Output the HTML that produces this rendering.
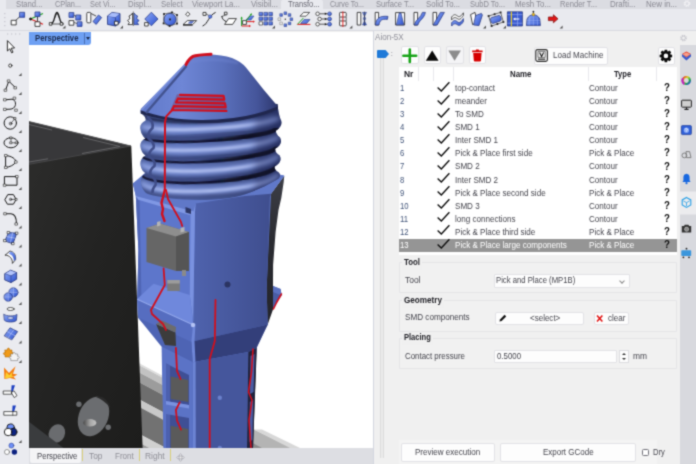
<!DOCTYPE html><html><head><meta charset="utf-8"><title>Aion-5X</title><style>html,body{margin:0;padding:0;background:#f0f0f0;}
body{width:696px;height:464px;overflow:hidden;font-family:"Liberation Sans",sans-serif;font-size:9px;color:#45454d;}
#app{position:relative;width:696px;height:464px;overflow:hidden;background:#f0f0f0;filter:url(#soft);}
#app div,#app span,#app i,#app b,#app em,#app svg{position:absolute;box-sizing:border-box;}
.t{white-space:nowrap;transform-origin:0 0;}
#tabrow{left:0;top:0;width:696px;height:9.3px;background:#dbdce2;overflow:hidden;}
#acttab{left:281px;top:0;width:42px;height:10px;background:#e9eaef;border-radius:2px 2px 0 0;}
#toolrow{left:0;top:9.3px;width:696px;height:21.5px;background:#e9eaef;border-bottom:1px solid #d9dae0;}
#lefttb{left:0;top:31px;width:29px;height:433px;background:#eaebf0;}
#vp{left:29px;top:32px;width:343.5px;height:416px;background:#fff;}
#vptab{left:29px;top:32px;width:62px;height:12.5px;background:#6ea0f3;border-radius:0 0 3px 0;}
#vptab i{left:54.5px;top:1px;width:1px;height:11px;background:#4a6fb5;}
#vptab b{left:56.5px;top:5px;width:0;height:0;border-left:2.5px solid transparent;border-right:2.5px solid transparent;border-top:3px solid #1c2b4d;}
#vpbot{left:29px;top:448px;width:344px;height:16px;background:#dddee3;}
#bact{left:1px;top:0;width:50.5px;height:14.5px;background:#f4f4f6;border-radius:0 0 2px 2px;}
#vpbot i{top:1px;width:1.5px;height:12px;background:#d8cf7a;}
#panel{left:373px;top:31px;width:323px;height:433px;background:#f0f0f0;border-left:1.2px solid #d3d6e0;}
#strip{left:679.5px;top:44.5px;width:17px;height:420px;background:#d8d9de;}
#track{left:380.2px;top:58px;width:3.8px;height:400px;background:#ebebeb;border-left:0.8px solid #dcdcdc;border-right:0.8px solid #dcdcdc;}
#marker{left:376.8px;top:50px;width:12.2px;height:8px;background:#1f7ad8;clip-path:polygon(0 0,72% 0,100% 50%,72% 100%,0 100%);border-radius:1px;}
.btn{background:#fdfdfd;border:1px solid #e2e2e6;border-radius:2px;}
.btn.dis{background:#f4f4f6;}
#table{left:398.5px;top:67px;width:278.5px;height:187.5px;background:#fff;}
.cd{top:67px;width:1px;height:13.5px;background:#e8e8ec;}
#selrow{left:398.5px;width:278.5px;height:12.6px;background:#959595;}
.grp{left:398.6px;width:278.4px;border:1px solid #e4e4e7;border-radius:1px;background:#f1f1f1;}
.ghb{height:12px;background:#f0f0f0;}
.inp{background:#fdfdfd;border:1px solid #e2e2e6;border-radius:1px;}
.inp em{right:5px;top:3.5px;width:4px;height:4px;border-right:1px solid #888;border-bottom:1px solid #888;transform:rotate(45deg);}
#spin{left:619px;top:349.5px;width:9.5px;height:13px;background:#fdfdfd;border:1px solid #dcdce0;}
#spin b{left:2px;width:0;height:0;border-left:2px solid transparent;border-right:2px solid transparent;}
#spin b.u{top:2px;border-bottom:2.5px solid #333;}
#spin b.d{top:7px;border-top:2.5px solid #333;}
#chk{left:641.8px;top:448.8px;width:7.6px;height:7.6px;border:1px solid #707078;border-radius:1.5px;background:#fff;}

#tabl{left:0;top:0;width:6px;height:10px;background:#e9eaef;}
</style></head><body>
<svg width="0" height="0" style="position:absolute"><defs><filter id="soft" x="0" y="0" width="100%" height="100%" color-interpolation-filters="sRGB"><feConvolveMatrix order="3" kernelMatrix="0.035 0.11 0.035 0.11 0.42 0.11 0.035 0.11 0.035" divisor="1" edgeMode="duplicate" preserveAlpha="true"/></filter></defs></svg>
<div id="app">
<div id="tabrow"><div id="acttab"></div><div id="tabl"></div>
<span class="t" style="left:15.50px;top:-0.15px;font-size:8.8px;line-height:8.8px;color:#898992;transform:scaleX(0.8737);">Stand...</span>
<span class="t" style="left:54.50px;top:-0.15px;font-size:8.8px;line-height:8.8px;color:#898992;transform:scaleX(0.8306);">CPlan...</span>
<span class="t" style="left:89.50px;top:-0.15px;font-size:8.8px;line-height:8.8px;color:#898992;transform:scaleX(0.8319);">Set Vi...</span>
<span class="t" style="left:127.50px;top:-0.15px;font-size:8.8px;line-height:8.8px;color:#898992;transform:scaleX(0.8738);">Displ...</span>
<span class="t" style="left:161.00px;top:-0.15px;font-size:8.8px;line-height:8.8px;color:#898992;transform:scaleX(0.8873);">Select</span>
<span class="t" style="left:192.00px;top:-0.15px;font-size:8.8px;line-height:8.8px;color:#898992;transform:scaleX(0.8948);">Viewport La...</span>
<span class="t" style="left:251.00px;top:-0.15px;font-size:8.8px;line-height:8.8px;color:#898992;transform:scaleX(0.8952);">Visibil...</span>
<span class="t" style="left:288.00px;top:-0.15px;font-size:8.8px;line-height:8.8px;color:#666670;transform:scaleX(0.8551);">Transfo...</span>
<span class="t" style="left:329.50px;top:-0.15px;font-size:8.8px;line-height:8.8px;color:#898992;transform:scaleX(0.8022);">Curve To...</span>
<span class="t" style="left:375.50px;top:-0.15px;font-size:8.8px;line-height:8.8px;color:#898992;transform:scaleX(0.8569);">Surface T...</span>
<span class="t" style="left:426.00px;top:-0.15px;font-size:8.8px;line-height:8.8px;color:#898992;transform:scaleX(0.8836);">Solid To...</span>
<span class="t" style="left:470.00px;top:-0.15px;font-size:8.8px;line-height:8.8px;color:#898992;transform:scaleX(0.8552);">SubD To...</span>
<span class="t" style="left:515.00px;top:-0.15px;font-size:8.8px;line-height:8.8px;color:#898992;transform:scaleX(0.8904);">Mesh To...</span>
<span class="t" style="left:559.50px;top:-0.15px;font-size:8.8px;line-height:8.8px;color:#898992;transform:scaleX(0.8629);">Render T...</span>
<span class="t" style="left:609.50px;top:-0.15px;font-size:8.8px;line-height:8.8px;color:#898992;transform:scaleX(0.8992);">Drafti...</span>
<span class="t" style="left:646.00px;top:-0.15px;font-size:8.8px;line-height:8.8px;color:#898992;transform:scaleX(0.9056);">New in...</span>
</div>
<div id="toolrow"></div>
<div id="lefttb"></div>
<div id="vp"></div>
<svg id="model" style="left:0;top:0" width="696" height="464" viewBox="0 0 696 464">
<defs>
<clipPath id="vpc"><rect x="29" y="32" width="343.5" height="416"/></clipPath>
<filter id="b1" x="-20%" y="-50%" width="140%" height="200%"><feGaussianBlur stdDeviation="0.9"/></filter>
<filter id="b2" x="-20%" y="-50%" width="140%" height="200%"><feGaussianBlur stdDeviation="2"/></filter>
<filter id="b3" x="-20%" y="-50%" width="140%" height="200%"><feGaussianBlur stdDeviation="3.2"/></filter>
<filter id="b05" x="-20%" y="-20%" width="140%" height="140%"><feGaussianBlur stdDeviation="0.5"/></filter>
<linearGradient id="gcone" x1="0" y1="0" x2="1" y2="0">
<stop offset="0" stop-color="#6078c8"/><stop offset="0.3" stop-color="#6e86d6"/><stop offset="0.6" stop-color="#5a70bc"/><stop offset="0.85" stop-color="#45559a"/><stop offset="0.97" stop-color="#323d76"/><stop offset="1" stop-color="#2a3366"/>
</linearGradient>
<linearGradient id="gring" x1="0" y1="0" x2="1" y2="0">
<stop offset="0" stop-color="#50639f"/><stop offset="0.3" stop-color="#5b70b6"/><stop offset="0.7" stop-color="#485994"/><stop offset="1" stop-color="#2c3668"/>
</linearGradient>
<linearGradient id="ghl" gradientUnits="userSpaceOnUse" x1="143" y1="0" x2="278" y2="0">
<stop offset="0" stop-color="#c9d4fa" stop-opacity="0.1"/><stop offset="0.2" stop-color="#c9d4fa" stop-opacity="0.9"/><stop offset="0.7" stop-color="#c9d4fa" stop-opacity="0.8"/><stop offset="1" stop-color="#c9d4fa" stop-opacity="0.05"/>
</linearGradient>
<linearGradient id="gcres" gradientUnits="userSpaceOnUse" x1="200" y1="0" x2="272" y2="0"><stop offset="0" stop-color="#0e1020" stop-opacity="0"/><stop offset="0.6" stop-color="#0e1020" stop-opacity="0.85"/><stop offset="1" stop-color="#0a0b14" stop-opacity="1"/></linearGradient>
<linearGradient id="gfr" x1="0" y1="0" x2="1" y2="0">
<stop offset="0" stop-color="#4f63ae"/><stop offset="1" stop-color="#3f4e8e"/>
</linearGradient>
<linearGradient id="gblk" x1="0" y1="0" x2="0" y2="1"><stop offset="0" stop-color="#3c3e46"/><stop offset="0.25" stop-color="#2a2b31"/><stop offset="1" stop-color="#1b1c22"/></linearGradient>
<linearGradient id="ghole" x1="0" y1="0" x2="1" y2="0"><stop offset="0" stop-color="#4a4a4a"/><stop offset="0.55" stop-color="#a8a8a8"/><stop offset="1" stop-color="#c4c4c4"/></linearGradient>
<linearGradient id="gbox" x1="0" y1="0" x2="1" y2="1">
<stop offset="0" stop-color="#2d2d2c"/><stop offset="0.5" stop-color="#232322"/><stop offset="1" stop-color="#1d1d1c"/>
</linearGradient>
<clipPath id="ringclip"><path id="ringsil" d="M140.7 110 L141 113 Q146.5 117 145.5 120.5 Q139 124 140.5 129.5 Q141 135 145.5 138.4 Q139.5 141 140.5 147 Q141 152 145.5 155.6 Q139.5 159 140.5 165 Q141 170 145.5 173.3 Q140 177 141 183 Q142 189 146 193 L148 194 C165 199.5 215 204 245.3 194.2 Q262 188.5 277 179.5 Q282 176.5 278.8 172.5 Q273.6 169.5 274.6 166.5 Q283 162 279.6 155.5 Q274.4 152 275.2 148.5 Q283.5 144 280 137.5 Q275.4 134 276 130.5 Q284 125 280.4 119 Q278.5 114 277.5 104 L210 100 Z"/></clipPath>
</defs>
<g clip-path="url(#vpc)">
<g id="rails">
<path d="M136 361.6 L166 377.5 L166 379.5 L136 363.6 Z" fill="#dedede"/>
<path d="M136 363.6 L166 379.5 L166 386.7 L136 370.8 Z" fill="#c2c2c2"/>
<path d="M136 370.8 L166 386.7 L166 396.4 L136 380.5 Z" fill="#9c9c9c"/>
<path d="M136 380.5 L166 396.4 L166 413.7 L136 397.8 Z" fill="#6e6e6e"/>
<path d="M136 397.8 L166 413.7 L166 421.2 L136 405.3 Z" fill="#c8c8c8"/>
<path d="M136 405.3 L166 421.2 L166 448.1 L136 432.2 Z" fill="#727272"/>
<path d="M136 432.2 L166 448.1 L166 456.8 L136 440.9 Z" fill="#d0d0d0"/>
<path d="M136 440.9 L166 456.8 L166 484.1 L136 468.2 Z" fill="#9a9a9a"/>
<path d="M247 426 L254 429.6 L300 452 L247 452 Z" fill="#b4b4b4"/>
<path d="M254 429.6 L262 429.6 L300 448 L290 448 Z" fill="#d8d8d8"/>
<path d="M247 440 L262 448 L247 448 Z" fill="#8a8a8a"/>
</g>
<g id="box">
<path d="M29 121.5 L131.3 146 L142.6 448 L29 448 Z" fill="url(#gbox)"/>
<path d="M29 121.5 L131 146 L29 164.3 Z" fill="#38383a"/>
<path d="M29 121.5 L131 146" stroke="#5a5a5c" stroke-width="0.8" fill="none"/>
<path d="M29 164.3 L131 146" stroke="#4c4c4e" stroke-width="0.8" fill="none"/>
<path d="M29 124.5 L52 130 M83 137.5 L120 146.5 L82 153.5 M29 162 L48 158.8" stroke="#6a6a6c" stroke-width="0.9" fill="none"/>
<ellipse cx="56.9" cy="433.5" rx="8" ry="9.6" transform="rotate(25 56.9 433.5)" fill="#6a6c6f"/>
<path d="M29 421.8 L63.5 448 L29 448 Z" fill="#3a3c3e"/>
<ellipse cx="93.5" cy="416.5" rx="14.6" ry="20.6" transform="rotate(24 93.5 416.5)" fill="#6b6d70"/>
<path d="M96 397 Q106 394.5 110.6 408 Q104 400 96 397 Z" fill="#2a2a2a"/>
<ellipse cx="89.8" cy="422.8" rx="6.6" ry="3.7" fill="url(#ghole)"/>
<circle cx="78.9" cy="404.2" r="2.7" fill="#6b6d70"/>
<circle cx="108.2" cy="427.2" r="2.7" fill="#6b6d70"/>
</g>
<g id="blue">
<path d="M271 193.7 L284.3 175.8 L283.7 182 L281.3 198 L278.5 210 L275.6 232 L273.1 265 L273 286 L273 309.5 L267.7 324.6 L257 343 L253 448 L240 448 L240 195 Z" fill="url(#gblk)"/>
<path d="M132.8 183.5 L150 172 L276 174 L284.3 175.8 L271 193.7 L267.7 265 L266.6 288 L267.7 324.6 L256.5 348 L250.5 448 L163.8 448 L162 345 L138 317.6 L137.2 300 L138.4 250 L135.8 196 Z" fill="#5d76cb"/>
<path d="M195.6 201 L245 192 L271 186 L271 193.7 L269.9 197.3 L267.7 265 L266.6 288 L267.7 324.6 L191.4 341.7 L193 324.5 L195 212 Z" fill="url(#gfr)"/>
<path d="M273 286 L280.6 289 L281.7 295.5 L276.3 303 L273 309.5 Z" fill="#4a5ca4"/>
<path d="M273 286 L280.6 289 L281.7 295.5 L273 292 Z" fill="#5b72c2"/>
<path d="M190.6 213 L195.6 203.5 L195 212 L193.2 322 L189.8 295 Z" fill="#7a92e0"/>
<path d="M135.8 196 L139.6 198.4 L141.4 297 L137.2 300 L138.4 250 Z" fill="#4f65b5"/>
<path d="M132.8 183.5 L145 173 L276 173.5 L284.3 175.8 L271 193.7 L245 196 L195.6 203.5 L193.5 211.5 L135.8 196 Z" fill="#6078c8"/>
<path d="M135.8 196 L193.5 211.5 L189.8 215 L138.2 199.8 Z" fill="#8098e4"/>
<path d="M185.5 207 L191 209 L191 214 L185.5 212.4 Z" fill="#2c3666"/>
<path d="M137.2 299 L153.5 283.8 L189.8 295 L193 324.5 Z" fill="#6f88dc"/>
<path d="M137.2 299 L193 324.5 L191.4 341.7 L138 317.6 Z" fill="#566dc0"/>
<path d="M138 317.6 L191.4 341.7 L192.7 362.3 L161.6 346.8 Z" fill="#4e64b4"/>
<path d="M191.4 341.7 L267.7 324.6 L256.5 348 L248.3 352 L192.7 362.3 Z" fill="#333f7a"/>
<path d="M193 324.5 L195.5 324 L194.5 341 L195.5 361.8 L192.7 362.3 L191.4 341.7 Z" fill="#6f87d8"/>
<path d="M137.2 299.3 L193 324.8" stroke="#93a8ec" stroke-width="1.2" fill="none"/>
<circle cx="193" cy="325" r="2.2" fill="#b4c3f4" filter="url(#b05)"/>
<path d="M156 324 L175.5 332.5 L176 346 L165 345 Z" fill="#3c3c3c"/>
<path d="M156 324 L162 320.5 L176 327 L175.5 332.5 Z" fill="#6c6c6c"/>
<path d="M161.6 346.8 L192.7 362.3 L193 448 L163.6 448 Z" fill="#5b73c6"/>
<path d="M192.7 362.3 L248.3 352 L247 448 L193 448 Z" fill="#45569c"/>
<path d="M192.7 362.3 L195.6 361.8 L195.8 448 L193 448 Z" fill="#6c84d4"/>
<path d="M248.3 352 L256.5 348 L253 448 L247 448 Z" fill="#20243f"/>
<path d="M250.5 356 L254.6 354 L253.6 392 L250 394 Z M249.8 402 L253.2 400 L252.4 440 L249.4 442 Z" fill="#4a5ca4"/>
<path d="M166 363.5 L189 375 L189 448 L166 448 Z" fill="#3f4f95"/>
<path d="M166 363.5 L170 365.5 L170 448 L166 448 Z" fill="#4c60ae"/>
<path d="M166 401 L189 405 L189 418 L166 414 Z" fill="#5b73c6"/>
<path d="M166 401 L189 405 L189 408.5 L166 404.5 Z" fill="#7a92e0"/>
<path d="M170.7 376.5 L188.3 380 L188.3 402 L170.7 399 Z" fill="#5a5a5a"/>
<path d="M170.7 425.7 L188.3 429 L188.3 448 L170.7 448 Z" fill="#5a5a5a"/>
<circle cx="219.8" cy="397.8" r="2.2" fill="#6a80cc"/><circle cx="219.8" cy="448" r="2.2" fill="#6a80cc"/>
<path d="M146.5 228 L160 223.5 L189 232 L189 271 L176 271 L146.5 262 Z" fill="#666"/>
<path d="M146.5 228 L160 223.5 L189 232 L176 236.5 Z" fill="#8e8e8e"/>
<path d="M176 236.5 L189 232 L189 271 L176 271 Z" fill="#555"/>
<path d="M157 222 L160.5 221 L160.5 225.5 L157 226.5 Z M180.5 228 L184.5 227 L184.5 231.5 L180.5 232.5Z" fill="#b5b5b5"/>
<rect x="167.3" y="280" width="12.5" height="11" fill="#7a7a7a"/>
<rect x="167.3" y="280" width="12.5" height="3.5" fill="#9c9c9c"/>
<rect x="182" y="270" width="4" height="6" fill="#8a8a8a"/>
<circle cx="227.5" cy="284.5" r="3" fill="#2b3462"/>
<g id="rings" clip-path="url(#ringclip)">
<rect x="130" y="100" width="160" height="110" fill="url(#gring)"/>
<path d="M142 129.3 A68.0 8 0 0 0 278 129.3" transform="rotate(-3.5 210.0 137.3)" fill="none" stroke="#232b58" stroke-width="4.5" filter="url(#b2)" opacity="0.75"/>
<path d="M142 148.0 A68.0 10 0 0 0 278 148.0" transform="rotate(-3.5 210.0 158.0)" fill="none" stroke="#232b58" stroke-width="4.5" filter="url(#b2)" opacity="0.75"/>
<path d="M142 166.8 A68.0 12 0 0 0 278 166.8" transform="rotate(-3.5 210.0 178.8)" fill="none" stroke="#232b58" stroke-width="4.5" filter="url(#b2)" opacity="0.75"/>
<path d="M142 182.5 A68.0 13 0 0 0 278 182.5" transform="rotate(-3.5 210.0 195.5)" fill="none" stroke="#232b58" stroke-width="4.5" filter="url(#b2)" opacity="0.75"/>
<path d="M143 121.0 A67.5 7.5 0 0 0 278 121.0" transform="rotate(-3.5 210.5 128.5)" fill="none" stroke="#8297dc" stroke-width="6.5" filter="url(#b2)"/>
<path d="M143 121.0 A67.5 7.5 0 0 0 278 121.0" transform="rotate(-3.5 210.5 128.5)" fill="none" stroke="url(#ghl)" stroke-width="2.2" filter="url(#b1)"/>
<path d="M143 140.0 A67.5 9.5 0 0 0 278 140.0" transform="rotate(-3.5 210.5 149.5)" fill="none" stroke="#8297dc" stroke-width="6.5" filter="url(#b2)"/>
<path d="M143 140.0 A67.5 9.5 0 0 0 278 140.0" transform="rotate(-3.5 210.5 149.5)" fill="none" stroke="url(#ghl)" stroke-width="2.2" filter="url(#b1)"/>
<path d="M143 159.0 A67.5 11.5 0 0 0 278 159.0" transform="rotate(-3.5 210.5 170.5)" fill="none" stroke="#8297dc" stroke-width="6.5" filter="url(#b2)"/>
<path d="M143 159.0 A67.5 11.5 0 0 0 278 159.0" transform="rotate(-3.5 210.5 170.5)" fill="none" stroke="url(#ghl)" stroke-width="2.2" filter="url(#b1)"/>
<path d="M143 177.8 A67.5 13 0 0 0 278 177.8" transform="rotate(-3.5 210.5 190.8)" fill="none" stroke="#8297dc" stroke-width="6.5" filter="url(#b2)"/>
<path d="M143 177.8 A67.5 13 0 0 0 278 177.8" transform="rotate(-3.5 210.5 190.8)" fill="none" stroke="url(#ghl)" stroke-width="2.2" filter="url(#b1)"/>
<path d="M142.5 132.8 A67.5 8 0 0 0 277.5 132.8" transform="rotate(-3.5 210.0 140.8)" fill="none" stroke="#141935" stroke-width="2.4" filter="url(#b05)"/>
<path d="M142.5 132.0 A67.5 8 0 0 0 277.5 132.0" transform="rotate(-3.5 210.0 140.0)" fill="none" stroke="url(#gcres)" stroke-width="4.2" filter="url(#b05)"/>
<path d="M142.5 151.5 A67.5 10 0 0 0 277.5 151.5" transform="rotate(-3.5 210.0 161.5)" fill="none" stroke="#141935" stroke-width="2.4" filter="url(#b05)"/>
<path d="M142.5 150.7 A67.5 10 0 0 0 277.5 150.7" transform="rotate(-3.5 210.0 160.7)" fill="none" stroke="url(#gcres)" stroke-width="4.2" filter="url(#b05)"/>
<path d="M142.5 170.3 A67.5 12 0 0 0 277.5 170.3" transform="rotate(-3.5 210.0 182.3)" fill="none" stroke="#141935" stroke-width="2.4" filter="url(#b05)"/>
<path d="M142.5 169.5 A67.5 12 0 0 0 277.5 169.5" transform="rotate(-3.5 210.0 181.5)" fill="none" stroke="url(#gcres)" stroke-width="4.2" filter="url(#b05)"/>
<path d="M140 107.5 A70.0 14 0 0 0 280 107.5" transform="rotate(-3.5 210.0 121.5)" fill="none" stroke="#1b2145" stroke-width="3" filter="url(#b1)"/>
<rect x="255" y="100" width="40" height="110" fill="#1d2450" opacity="0.35" filter="url(#b3)"/>
</g>
<path d="M147 116.5 Q154 122 152.5 128 Q147 133 148.5 138.5 Q155 143 153.5 148 Q148 152 149.5 157 Q156 161 154.5 166 Q149 170 150.5 175 Q157 180 155.5 185 Q152 189 152.5 193" fill="none" stroke="#3f4d88" stroke-width="2.6" filter="url(#b05)"/>
<path d="M184.8 64 Q190 57 201 54.6 Q220 53.6 232 58 Q241 61.5 246 67.5 L263.5 89.5 L276.8 105.2 Q278.3 107 277 108.8 Q245 122.5 201 122 Q165 121 140.7 113 L140.7 109 Z" fill="url(#gcone)"/>
<path d="M140.7 110.2 Q165 119.4 201 120 Q245 120.3 277.6 106.6 Q278.4 107.6 277.4 109.6 Q245 123.6 201 123 Q165 122 140.7 113.8 Z" fill="#20274e"/>
<path d="M186.5 66 L146 113" stroke="#43528f" stroke-width="2.4" fill="none" filter="url(#b05)"/>
<path d="M184.8 64.5 L141.5 110" stroke="#7a90dc" stroke-width="1.2" fill="none" filter="url(#b05)"/>
<path d="M190 62 Q212 56.5 238 63" stroke="#7389d6" stroke-width="1.5" fill="none" filter="url(#b1)" opacity="0.7"/>
<g fill="none" stroke="#d10f1d" stroke-linecap="round" stroke-linejoin="round">
<path d="M186 64.5 Q189 58.6 193 56.4 Q196.5 54.8 211 54.2" stroke-width="3"/>
<path d="M177 94.2 L224 96 L227 111.5 L170.5 109.8 Z" fill="#8c1428" stroke="none" opacity="0.3"/>
<path d="M223.5 95.8 L180 94.8 M224.3 99.6 L178 98.6 M225 103.4 L176 102.4 M225.7 107.2 L174 106.2 M226.5 111 L172 110 M223.5 95.8 L224.3 99.6 M178 98.6 L176 102.4 M225 103.4 L225.7 107.2 M174 106.2 L172 110" stroke-width="2.2"/><path d="M172.2 110 L166.3 116.4 L165 122 L164.8 190" stroke-width="2"/>
<path d="M164.8 190 L161.5 203 L163 209 L162 214 L164.5 221" stroke-width="2.4"/>
<path d="M166 190 L168 199 L181 222 L182.2 226" stroke-width="1.8"/>
<path d="M163.6 268.5 L164.8 285 L151 310 L152 314 L163 324 L166 330" stroke-width="1.8"/>
<path d="M215.5 300 L214.8 341 L209.7 359 L209.7 448" stroke-width="1.8"/>
<path d="M175.9 348 L177 371 L180.5 379 M179.7 402.4 L175.9 410 L177 420.5 L181 429.6" stroke-width="1.8"/>
<path d="M281.4 294 L276.6 302.5 L273.4 309 M253 349 L251.5 372 L248.5 392 L252 400 L249 420 L251 448" stroke-width="1.6"/>
</g>
</g></g></svg>
<svg id="ticons" style="left:0;top:0" width="696" height="48" viewBox="0 0 696 48">
<defs><linearGradient id="ib" x1="0" y1="0" x2="1" y2="1"><stop offset="0" stop-color="#8eaaf8"/><stop offset="1" stop-color="#2c50cc"/></linearGradient></defs>
<g stroke="#1a1a1a" stroke-width="0.8" fill="none" stroke-linejoin="round">
<rect x="4.2" y="13" width="1.2" height="1.2" fill="#c4c4cc" stroke="none"/>
<rect x="4.2" y="17" width="1.2" height="1.2" fill="#c4c4cc" stroke="none"/>
<rect x="4.2" y="21" width="1.2" height="1.2" fill="#c4c4cc" stroke="none"/>
<rect x="4.2" y="25" width="1.2" height="1.2" fill="#c4c4cc" stroke="none"/>
<path d="M14 22 L21 15.5"/><rect x="11.2" y="20.3" width="5" height="4.6" fill="#fff"/><rect x="19.6" y="12.3" width="5" height="5" fill="url(#ib)" stroke="#2a3c8c"/>
<path d="M37.5 14 L37.5 24" /><path d="M30.5 19 L43 13.6" stroke="#1ea01e" stroke-width="1.1"/><path d="M30.5 19 L43 24.2" stroke="#e02020" stroke-width="1.1"/><circle cx="30.6" cy="19" r="1.1" fill="#111"/><rect x="35" y="12" width="5" height="4.6" fill="url(#ib)" stroke="#2a3c8c"/><rect x="35" y="21.8" width="5" height="4.6" fill="#fff"/>
<path d="M50.5 24 C55 24 54.5 12.5 57 12.5 C59.5 12.5 59 24 63.5 24" stroke-width="1.3"/><path d="M51 24 L63 24 M54.5 18 L57 13 L59.5 18" stroke-width="0.7"/><rect x="49.3" y="22.6" width="2.6" height="2.6" fill="#fff"/><rect x="60.2" y="22.6" width="2.6" height="2.6" fill="#fff"/>
<path d="M62.5 28.5 L65.5 28.5 L65.5 25.5 Z" fill="#555" stroke="none"/>
<rect x="69" y="12.6" width="4.8" height="4.8" fill="url(#ib)" stroke="#2a3c8c"/><rect x="69" y="20.6" width="4.8" height="4.6" fill="#fff"/><rect x="75.8" y="15" width="5" height="5" fill="url(#ib)" stroke="#2a3c8c"/><rect x="77.2" y="21.8" width="4.8" height="4.6" fill="url(#ib)" stroke="#2a3c8c"/><path d="M74 15 L76 16.5 M74 22.5 L77 23.5" stroke-width="0.6"/>
<rect x="86.8" y="12.4" width="4" height="10.4" rx="1" fill="#fff"/><path d="M91 13.5 L96 16" /><path d="M93 21.5 L98.5 15 L101.6 17.6 L96.2 24.4 Z" fill="url(#ib)" stroke="#2a3c8c"/>
<path d="M107.5 16 L112 12.4 L120 13.6 L120 22.4 L115.5 26 L107.5 24.4 Z" fill="url(#ib)" stroke="#22327a"/><path d="M107.5 16 L115.5 17.4 L120 13.6 M115.5 17.4 L115.5 26" stroke="#22327a" stroke-width="0.6"/><path d="M107.8 16.2 L112 12.8 L119.6 13.8 L115.5 17.2 Z" fill="#a8bcfa" stroke="none"/><rect x="114.5" y="21.3" width="3.6" height="3.6" fill="#fff"/>
<path d="M120 28.5 L123 28.5 L123 25.5 Z" fill="#555" stroke="none"/>
<path d="M132.6 13 L131 15 L129 16 L130 18.5 L127.6 20.5 L129.4 22.5 L128 24.6 L132.6 24.6 Z" fill="#fff"/><path d="M134 13 L135.6 15 L137.6 16 L136.6 18.5 L139 20.5 L137.2 22.5 L138.6 24.6 L134 24.6 Z" fill="url(#ib)" stroke="#2a3c8c"/><path d="M133.3 11.5 L133.3 26" stroke="#555"/>
<path d="M144.8 19 L151.4 12.2 L158 19 L151.4 25.8 Z" fill="url(#ib)" stroke="#2a3c8c"/><rect x="144.6" y="22.6" width="3.6" height="3.4" fill="#fff"/>
<circle cx="170" cy="19.4" r="6" fill="url(#ib)" stroke="#22327a"/><path d="M164 14 L172 12.4 L177 15 L177 23.6 L169.6 26 L163.6 23.4 Z" stroke="#333" stroke-width="0.6"/>
<rect x="163.1" y="13.1" width="1.8" height="1.8" fill="#222" stroke="none"/>
<rect x="171.1" y="11.5" width="1.8" height="1.8" fill="#222" stroke="none"/>
<rect x="176.1" y="14.1" width="1.8" height="1.8" fill="#222" stroke="none"/>
<rect x="176.1" y="22.700000000000003" width="1.8" height="1.8" fill="#222" stroke="none"/>
<rect x="168.7" y="25.1" width="1.8" height="1.8" fill="#222" stroke="none"/>
<rect x="162.7" y="22.5" width="1.8" height="1.8" fill="#222" stroke="none"/>
<rect x="169.1" y="18.5" width="1.8" height="1.8" fill="#222" stroke="none"/>
<path d="M185.6 14.2 L187.8 12 L190 14.2 L187.8 16.4 Z" fill="#fff"/><path d="M183 24.6 L187.4 20.6 L196.6 20.6 L192.6 24.6 Z" fill="#fff"/><path d="M188.4 23.2 L190 21.4 L193.6 21.4 L192 23.2 Z" fill="url(#ib)" stroke="#2a3c8c" stroke-width="0.5"/><path d="M183 25.2 L192.6 25.2" stroke-width="0.9"/>
<path d="M202.6 26 C208 24 208.5 15.6 215.6 12.4" stroke-width="1"/><rect x="203" y="12.4" width="3" height="3" fill="#fff"/><path d="M206 14 L209.6 15.8" stroke-width="0.6"/><circle cx="210.2" cy="16.6" r="1.7" fill="url(#ib)" stroke="#2a3c8c" stroke-width="0.6"/>
<path d="M222 16 C222 21 226 20 227.6 23.6" stroke-width="1"/><path d="M224.6 24.4 L228.6 18.6 L236.4 18.6 L232.6 24.4 Z" fill="#fff"/><rect x="224.4" y="12.2" width="2.6" height="2.6" fill="#fff"/><path d="M221.4 16.6 L225.6 15" stroke-width="0.6"/>
<rect x="242.6" y="20.6" width="3.8" height="3.8" fill="#fff"/><path d="M246 20 L249.6 16 L254 16 L251 20 Z" fill="url(#ib)" stroke="#2a3c8c" stroke-width="0.5"/><path d="M241.6 26 L241.6 17.6 M246 21 L251.4 14" stroke="#1ea01e" stroke-width="1"/><path d="M241.6 26 L250 26 M247 21.6 L254 21.6" stroke="#e02020" stroke-width="1"/><path d="M241.6 16.4 L240.4 18.6 L242.8 18.6 Z M251.8 13 L249.8 14.4 L251.6 15.6 Z" fill="#1ea01e" stroke="none"/><path d="M251 26 L249 24.8 L249 27.2 Z M255 21.6 L253 20.4 L253 22.8Z" fill="#e02020" stroke="none"/>
<rect x="259.0" y="12.4" width="3.6" height="3.2" fill="url(#ib)" stroke="#22327a" stroke-width="0.6"/>
<rect x="263.9" y="12.4" width="3.6" height="3.2" fill="url(#ib)" stroke="#22327a" stroke-width="0.6"/>
<rect x="268.8" y="12.4" width="3.6" height="3.2" fill="url(#ib)" stroke="#22327a" stroke-width="0.6"/>
<rect x="259.0" y="17.1" width="3.6" height="3.2" fill="url(#ib)" stroke="#22327a" stroke-width="0.6"/>
<rect x="263.9" y="17.1" width="3.6" height="3.2" fill="url(#ib)" stroke="#22327a" stroke-width="0.6"/>
<rect x="268.8" y="17.1" width="3.6" height="3.2" fill="url(#ib)" stroke="#22327a" stroke-width="0.6"/>
<rect x="259.0" y="21.8" width="3.6" height="3.2" fill="#fff" stroke-width="0.6"/>
<rect x="263.9" y="21.8" width="3.6" height="3.2" fill="url(#ib)" stroke="#22327a" stroke-width="0.6"/>
<rect x="268.8" y="21.8" width="3.6" height="3.2" fill="url(#ib)" stroke="#22327a" stroke-width="0.6"/>
<path d="M272 28.5 L275 28.5 L275 25.5 Z" fill="#555" stroke="none"/>
<rect x="284.0" y="11.9" width="2.6" height="2.6" fill="url(#ib)" stroke="#22327a" stroke-width="0.5"/>
<rect x="288.2" y="13.7" width="2.6" height="2.6" fill="url(#ib)" stroke="#22327a" stroke-width="0.5"/>
<rect x="290.0" y="17.9" width="2.6" height="2.6" fill="url(#ib)" stroke="#22327a" stroke-width="0.5"/>
<rect x="288.2" y="22.1" width="2.6" height="2.6" fill="url(#ib)" stroke="#22327a" stroke-width="0.5"/>
<rect x="284.0" y="23.9" width="2.6" height="2.6" fill="url(#ib)" stroke="#22327a" stroke-width="0.5"/>
<rect x="279.8" y="22.1" width="2.6" height="2.6" fill="#eee" stroke="#777" stroke-width="0.5"/>
<rect x="278.0" y="17.9" width="2.6" height="2.6" fill="#eee" stroke="#777" stroke-width="0.5"/>
<rect x="279.8" y="13.7" width="2.6" height="2.6" fill="url(#ib)" stroke="#22327a" stroke-width="0.5"/>
<circle cx="285.3" cy="19.2" r="0.7" fill="#222" stroke="none"/>
<path d="M300 16.2 L303.6 12.4 L309.6 12.4 L306 16.2 Z" fill="#fff" stroke-width="0.7"/><path d="M300.6 23.6 L304 19.6 L310 19.6 L306.6 23.6 Z" fill="url(#ib)" stroke="#22327a" stroke-width="0.6"/><path d="M297.4 24.4 L303.4 18" stroke="#1ea01e" stroke-width="1"/><path d="M297.4 24.4 L310.4 24.4" stroke="#e02020" stroke-width="1"/>
<path d="M319.6 13.8 L329 13.8" stroke-width="0.7"/><circle cx="317.6" cy="13.8" r="1.8" fill="#fff" stroke-width="0.7"/><circle cx="329.6" cy="13.8" r="1.9" fill="url(#ib)" stroke="#22327a" stroke-width="0.6"/><path d="M326.8 13.8 L324.8 12.600000000000001 L324.8 15.0 Z" fill="#111" stroke="none"/>
<path d="M321.6 19 L329 19" stroke-width="0.7"/><circle cx="319.6" cy="19" r="1.8" fill="#fff" stroke-width="0.7"/><circle cx="329.6" cy="19" r="1.9" fill="url(#ib)" stroke="#22327a" stroke-width="0.6"/><path d="M326.8 19 L324.8 17.8 L324.8 20.2 Z" fill="#111" stroke="none"/>
<path d="M319.6 24.2 L329 24.2" stroke-width="0.7"/><circle cx="317.6" cy="24.2" r="1.8" fill="#fff" stroke-width="0.7"/><circle cx="329.6" cy="24.2" r="1.9" fill="url(#ib)" stroke="#22327a" stroke-width="0.6"/><path d="M326.8 24.2 L324.8 23.0 L324.8 25.4 Z" fill="#111" stroke="none"/>
<rect x="339.6" y="12.4" width="6.6" height="4.6" rx="0.8" fill="#fff"/><rect x="339.6" y="21" width="6.6" height="4.8" rx="0.8" fill="#fff"/><path d="M339.6 17 L339.6 21 M346.2 17 L346.2 21" stroke-width="0.6"/><path d="M342.9 11.4 L342.9 27" stroke="#e02020" stroke-width="1"/>
<path d="M349.4 28.5 L352.4 28.5 L352.4 25.5 Z" fill="#555" stroke="none"/>
<rect x="357.2" y="12.4" width="3.6" height="12.6" fill="#fff"/><path d="M362.6 12.4 L366.4 12.4 L363.4 18.6 L366.4 25 L362.6 25 L365.6 18.6 Z" fill="url(#ib)" stroke="#22327a" stroke-width="0.6"/><path d="M364.5 11.6 L364.5 26" stroke-width="0.5"/>
<rect x="375.2" y="12.4" width="3.4" height="12.6" fill="#fff"/><path d="M375.4 25 C376 18 380 15.6 388 16.4 L387.4 19.4 C381.6 18.6 379.6 20.6 379 25 Z" fill="url(#ib)" stroke="#22327a" stroke-width="0.7"/>
<rect x="395.6" y="12.6" width="9" height="12.4" fill="#fff"/><path d="M399.2 13 L401 13 L403.8 24.8 L396.4 24.8 Z" fill="url(#ib)" stroke="#22327a" stroke-width="0.6"/>
<rect x="414" y="12.4" width="3.6" height="12.6" fill="#fff"/><path d="M414.2 25 C415.4 19.6 421 17.6 422.4 12.4 L425.4 12.4 C424.2 18.6 419.2 20 417.8 25 Z" fill="url(#ib)" stroke="#22327a" stroke-width="0.7"/>
<rect x="433" y="12.4" width="3.6" height="12.6" fill="#fff"/><path d="M433.2 25 L440.4 12.4 L444.4 12.4 L437.2 25 Z" fill="url(#ib)" stroke="#22327a" stroke-width="0.7"/>
<path d="M451.6 17 C454 14 455.4 14.4 457.4 16 C459.4 17.6 461 16.4 463.4 12.8 L463.4 15.4 C461 19 459.4 20 457.4 18.6 C455.4 17.2 454 17 451.6 19.8 Z" fill="#fff" stroke-width="0.7"/><path d="M451.6 22.8 C454 19.8 455.4 20.2 457.4 21.8 C459.4 23.4 461 22.2 463.4 18.6 L463.4 21.6 C461 25.2 459.4 26.2 457.4 24.8 C455.4 23.4 454 23.2 451.6 26 Z" fill="url(#ib)" stroke="#22327a" stroke-width="0.7"/>
<path d="M470.6 14.6 L475 12.4 L477 22.4 L472.6 24.6 Z" fill="#fff"/><path d="M475.6 15.6 L481.4 13.4 L482.4 15 L479 25.6 L473.6 25 Z" fill="url(#ib)" stroke="#22327a" stroke-width="0.7"/>
<path d="M483 28.5 L486 28.5 L486 25.5 Z" fill="#555" stroke="none"/>
<path d="M488.6 16 L500.6 12.4 L503.4 22 L491.6 26 Z" stroke="#333" stroke-width="0.7"/><path d="M491.4 17.6 L499 15.4 C501 15.4 502 19.6 500.4 21 L493 23.4 C490.6 23.4 489.8 18.6 491.4 17.6 Z" fill="url(#ib)" stroke="#22327a" stroke-width="0.7"/>
<rect x="487.70000000000005" y="15.1" width="1.8" height="1.8" fill="#222" stroke="none"/>
<rect x="499.70000000000005" y="11.5" width="1.8" height="1.8" fill="#222" stroke="none"/>
<rect x="502.5" y="21.1" width="1.8" height="1.8" fill="#222" stroke="none"/>
<rect x="490.70000000000005" y="25.1" width="1.8" height="1.8" fill="#222" stroke="none"/>
<rect x="493.70000000000005" y="13.299999999999999" width="1.8" height="1.8" fill="#222" stroke="none"/>
<rect x="496.5" y="23.1" width="1.8" height="1.8" fill="#222" stroke="none"/>
<path d="M503 28.5 L506 28.5 L506 25.5 Z" fill="#555" stroke="none"/>
<rect x="507.4" y="11.8" width="15" height="14.2" fill="#3b5bd0" stroke="#1c2c70" stroke-width="0.7"/><path d="M507.4 14.6 L522.4 14.6 M507.4 23.2 L522.4 23.2 M517.6 11.8 L517.6 26" stroke="#9fb4f6" stroke-width="0.6"/><path d="M511.4 11.8 L511.4 26" stroke="#f0d020" stroke-width="1.1"/><path d="M513 19 L515.4 17.4 L515.4 18.4 L519.4 18.4 L519.4 19.6 L515.4 19.6 L515.4 20.6 Z" fill="#fff" stroke="none"/>
<path d="M526.4 25.6 L527 19 C528.4 16 531 14.8 533.4 14.8 C535.8 14.8 538.4 16 539.8 19 L540.4 25.6 Z" fill="url(#ib)" stroke="#22327a" stroke-width="0.7"/><path d="M529.6 17 L529.2 25.4 M533.4 15 L533.4 25.4 M537.2 17 L537.6 25.4 M526.8 20.6 L540 20.6 M526.6 23 L540.2 23" stroke="#a9bdf8" stroke-width="0.4"/><path d="M533.4 11.6 L533.4 14" stroke-width="0.7"/><circle cx="533.4" cy="11.6" r="0.9" fill="#222" stroke="none"/><circle cx="533.4" cy="14.6" r="1.3" fill="#f0c020" stroke="#806000" stroke-width="0.4"/>
<path d="M548.4 17 L553.4 17 L553.4 14.8 L558 18.8 L553.4 22.8 L553.4 20.6 L548.4 20.6 Z" fill="#e01818" stroke="#7a0c0c" stroke-width="0.7"/>
<path d="M559.6 28.5 L562.6 28.5 L562.6 25.5 Z" fill="#555" stroke="none"/>
</g>
<circle cx="687" cy="3.6" r="2.6" fill="none" stroke="#f2f2f5" stroke-width="1.6" stroke-dasharray="1.2 0.85"/><circle cx="687" cy="3.6" r="1.9" fill="none" stroke="#f2f2f5" stroke-width="1"/>
</svg><svg id="licons" style="left:0;top:30px" width="29" height="434" viewBox="0 30 29 434">
<g stroke="#1a1a1a" stroke-width="0.85" fill="none" stroke-linejoin="round" stroke-linecap="round">
<rect x="7" y="33.4" width="1.2" height="1.2" fill="#c4c4cc" stroke="none"/>
<rect x="11" y="33.4" width="1.2" height="1.2" fill="#c4c4cc" stroke="none"/>
<rect x="15" y="33.4" width="1.2" height="1.2" fill="#c4c4cc" stroke="none"/>
<rect x="19" y="33.4" width="1.2" height="1.2" fill="#c4c4cc" stroke="none"/>
<path d="M7.4 41 L7.4 51 L9.8 48.8 L11.6 52.8 L13 52.2 L11.2 48.2 L14.2 48 Z" fill="#fff" stroke-width="0.9"/>
<circle cx="10.3" cy="65.6" r="1.6" fill="#fff"/>
<path d="M18.6 76 L21.6 76 L21.6 73 Z" fill="#555" stroke="none"/>
<path d="M5.6 90 L8.8 81.2 L15.4 87.6" stroke-width="1"/>
<rect x="4.5" y="89.1" width="2.2" height="2.2" fill="#fff" stroke-width="0.6"/>
<rect x="7.7" y="79.9" width="2.2" height="2.2" fill="#fff" stroke-width="0.6"/>
<rect x="14.3" y="86.7" width="2.2" height="2.2" fill="#fff" stroke-width="0.6"/>
<path d="M18.6 95 L21.6 95 L21.6 92 Z" fill="#555" stroke="none"/>
<path d="M5 99.8 L12 99.2 C17 100 17 109 10 109.2 L5 109.4" stroke-width="1"/>
<rect x="3.9" y="98.7" width="2.2" height="2.2" fill="#fff" stroke-width="0.6"/>
<rect x="13.5" y="97.1" width="2.2" height="2.2" fill="#fff" stroke-width="0.6"/>
<rect x="3.9" y="108.3" width="2.2" height="2.2" fill="#fff" stroke-width="0.6"/>
<rect x="15.1" y="109.1" width="2.2" height="2.2" fill="#fff" stroke-width="0.6"/>
<path d="M18.6 114 L21.6 114 L21.6 111 Z" fill="#555" stroke="none"/>
<circle cx="10.3" cy="123" r="6.2" stroke-width="1"/><circle cx="10.6" cy="123.6" r="1.3" stroke-width="0.7"/><path d="M10.6 123.6 L15 118.6" stroke-width="0.6"/>
<rect x="14.1" y="117.5" width="1.8" height="1.8" fill="#fff" stroke-width="0.6"/>
<path d="M18.6 133 L21.6 133 L21.6 130 Z" fill="#555" stroke="none"/>
<ellipse cx="11" cy="142.8" rx="7" ry="5" stroke-width="1"/><path d="M11 137.8 L11 142.8 L16 142.8" stroke-width="0.6"/>
<rect x="10.1" y="136.9" width="1.8" height="1.8" fill="#fff" stroke-width="0.6"/>
<rect x="10.1" y="141.9" width="1.8" height="1.8" fill="#fff" stroke-width="0.6"/>
<rect x="15.5" y="141.9" width="1.8" height="1.8" fill="#fff" stroke-width="0.6"/>
<path d="M18.6 152 L21.6 152 L21.6 149 Z" fill="#555" stroke="none"/>
<path d="M6 155.6 C12 156 15.6 159 16 162 C14 165 10 167 6 167.4 Z" stroke-width="1"/>
<rect x="4.9" y="154.5" width="2.2" height="2.2" fill="#fff" stroke-width="0.6"/>
<rect x="14.9" y="160.9" width="2.2" height="2.2" fill="#fff" stroke-width="0.6"/>
<rect x="4.9" y="166.3" width="2.2" height="2.2" fill="#fff" stroke-width="0.6"/>
<path d="M18.6 171 L21.6 171 L21.6 168 Z" fill="#555" stroke="none"/>
<rect x="4.8" y="176.6" width="12.2" height="8.6" stroke-width="1"/>
<rect x="3.7" y="184.1" width="2.2" height="2.2" fill="#fff" stroke-width="0.6"/>
<rect x="15.9" y="175.5" width="2.2" height="2.2" fill="#fff" stroke-width="0.6"/>
<path d="M18.6 190 L21.6 190 L21.6 187 Z" fill="#555" stroke="none"/>
<path d="M5 199.4 L7.8 194.6 L13.4 194.6 L16.2 199.4 L13.4 204.2 L7.8 204.2 Z" stroke-width="1"/><circle cx="10.6" cy="199.4" r="1.2" stroke-width="0.6"/><path d="M10.6 199.4 L16.2 199.4" stroke-width="0.6"/>
<rect x="15.3" y="198.5" width="1.8" height="1.8" fill="#fff" stroke-width="0.6"/>
<path d="M18.6 209 L21.6 209 L21.6 206 Z" fill="#555" stroke="none"/>
<path d="M5.4 213.8 L11 213.8 C15 214 16.4 217 16.4 223.6" stroke-width="1.1"/>
<rect x="4.1" y="212.7" width="2.2" height="2.2" fill="#fff" stroke-width="0.6"/>
<rect x="15.3" y="222.9" width="2.2" height="2.2" fill="#fff" stroke-width="0.6"/>
<path d="M18.6 228.6 L21.6 228.6 L21.6 225.6 Z" fill="#555" stroke="none"/>
<path d="M5 240.6 L8.6 232.6 L16.8 233.2 L13 243.4 Z" fill="url(#ib)" stroke="#22327a"/><path d="M6.8 236.6 L15 238.2 M10.6 241.8 L12.6 233" stroke="#dfe6ff" stroke-width="0.5"/>
<rect x="3.9" y="239.5" width="2.2" height="2.2" fill="#fff" stroke-width="0.6"/>
<rect x="7.5" y="231.5" width="2.2" height="2.2" fill="#fff" stroke-width="0.6"/>
<rect x="15.7" y="232.1" width="2.2" height="2.2" fill="#fff" stroke-width="0.6"/>
<rect x="11.9" y="242.5" width="2.2" height="2.2" fill="#fff" stroke-width="0.6"/>
<path d="M18.6 247.6 L21.6 247.6 L21.6 244.6 Z" fill="#555" stroke="none"/>
<path d="M5.4 255 L10 251 C14 252 16 255 15.6 259.6 L12.4 263.4 C12.6 258.6 10 255.6 5.4 255 Z" fill="#fff" stroke-width="0.8"/><path d="M8.6 253.8 C12 254.6 14 257 13.8 261 L15.6 259.4 C16 255.6 14 252.4 10.6 251.6 Z" fill="url(#ib)" stroke="none"/>
<path d="M18.6 266.4 L21.6 266.4 L21.6 263.4 Z" fill="#555" stroke="none"/>
<path d="M5 273.6 L10.6 270.2 L16.6 272.6 L16.6 279.2 L11 282.6 L5 280 Z" fill="url(#ib)" stroke="#22327a"/><path d="M5.2 273.7 L10.6 270.5 L16.3 272.7 L11 275.8 Z" fill="#b3c4fb" stroke="none"/><path d="M5 273.6 L11 275.9 L16.6 272.6 M11 275.9 L11 282.6" stroke="#22327a" stroke-width="0.5"/>
<path d="M18.6 285.6 L21.6 285.6 L21.6 282.6 Z" fill="#555" stroke="none"/>
<circle cx="13.4" cy="292.4" r="4.6" fill="url(#ib)" stroke="#22327a" stroke-width="0.7"/><circle cx="8.2" cy="297" r="4.2" fill="url(#ib)" stroke="#22327a" stroke-width="0.7"/><path d="M8.8 292.4 L18 292.4 M13.4 287.8 L13.4 297 M4 297 L12.4 297 M8.2 292.8 L8.2 301.2" stroke="#c9d5fc" stroke-width="0.4"/>
<path d="M18.6 305 L21.6 305 L21.6 302 Z" fill="#555" stroke="none"/>
<ellipse cx="10.6" cy="309" rx="3.6" ry="1.5" fill="#fff" stroke-width="0.7"/><path d="M4 314.4 C6 316.4 15 316.4 17 314.4 L16.4 320.4 C14 322.6 7 322.6 4.6 320.4 Z" fill="url(#ib)" stroke="#22327a" stroke-width="0.7"/><ellipse cx="10.6" cy="318" rx="3" ry="1.2" fill="#dfe6ff" stroke="#22327a" stroke-width="0.5"/>
<path d="M18.6 324 L21.6 324 L21.6 321 Z" fill="#555" stroke="none"/>
<path d="M4.4 335.6 L10 327.8 L17.6 331.6 L12 339.6 Z" fill="url(#ib)" stroke="#22327a" stroke-width="0.7"/><path d="M7.2 331.6 L14.8 335.6 M8.2 337.6 L13.8 329.8" stroke="#c9d5fc" stroke-width="0.5"/>
<path d="M18.6 343.6 L21.6 343.6 L21.6 340.6 Z" fill="#555" stroke="none"/>
<path d="M5 350 L7.4 350 C6.8 347.6 10 347.4 9.6 350 L12 350 L12 352.6 C14.4 352 14.4 355.2 12 354.6 L12 357 L5 357 L5 354.6 C2.8 355.2 2.8 352 5 352.6 Z" fill="#f09a18" stroke="#a05c00" stroke-width="0.5"/><path d="M10.8 354 L13 354 C12.6 352 15.6 352 15.2 354 L17.6 354 L17.6 356.4 C19.8 355.8 19.8 359 17.6 358.4 L17.6 360.6 L10.8 360.6 L10.8 358.4 C8.8 359 8.8 355.8 10.8 356.4 Z" fill="#f4f4f4" stroke="#666" stroke-width="0.5"/>
<path d="M18.6 363 L21.6 363 L21.6 360 Z" fill="#555" stroke="none"/>
<path d="M4.4 379 L4 367.4 L9 373 L15.6 366.2 L13 373.8 L17.4 374.4 L13.4 376.8 L16 379.6 L10 378 Z" fill="#f47c10" stroke="none"/><path d="M5 378.4 L6 372 L9.4 375.2 L12.6 371.4 L11.6 375.6 L14 376.4 L10 377.6 Z" fill="#fbd030" stroke="none"/>
<path d="M11.6 385.2 L15 385.2 L12.6 392 L11.2 392 Z" fill="#1a3cc0" stroke="none"/><rect x="3.6" y="391" width="8" height="3.2" fill="#fff" stroke-width="0.7"/><path d="M11.6 392.4 L14 390.8 L17 395.6 L14.6 397.4 Z" fill="#fff" stroke-width="0.7"/>
<path d="M12.6 405.6 L16 405.6 L13.8 412.4 L12.2 412.4 Z" fill="#1a3cc0" stroke="none"/><rect x="4.2" y="411.6" width="12.6" height="3.6" fill="#fff" stroke-width="0.7"/><path d="M12.8 411.6 L12.8 415.2" stroke-width="0.6"/>
<circle cx="10.6" cy="427.6" r="3.7" fill="#6f90f6" stroke="#111" stroke-width="0.9"/><circle cx="13.2" cy="432" r="3.7" fill="#0c2280" stroke="#111" stroke-width="0.9"/><circle cx="8" cy="432" r="3.7" fill="#fff" stroke="#111" stroke-width="0.9"/>
<path d="M18.6 443 L21.6 443 L21.6 440 Z" fill="#555" stroke="none"/>
<circle cx="11.4" cy="445.6" r="2.5" fill="#6f90f6" stroke="#2a3c8c" stroke-width="0.5"/><circle cx="14.4" cy="452" r="2.7" fill="#0c2280" stroke="none"/><circle cx="7" cy="452" r="2.5" fill="#fff" stroke="#555" stroke-width="0.6"/>
</g></svg>
<div id="vptab"><i></i><b></b></div>
<span class="t" style="left:34.70px;top:33.51px;font-size:9.2px;line-height:9.2px;color:#1c2b4d;font-weight:bold;transform:scaleX(0.8422);">Perspective</span>
<div id="vpbot"><div id="bact"></div><i style="left:52.6px"></i><i style="left:109.6px"></i><i style="left:140.8px"></i></div>
<svg style="left:176px;top:453px" width="9" height="9" viewBox="0 0 9 9"><path d="M4.5 0.6 L6 2.4 L5.1 2.4 L5.1 3.9 L6.6 3.9 L6.6 3 L8.4 4.5 L6.6 6 L6.6 5.1 L5.1 5.1 L5.1 6.6 L6 6.6 L4.5 8.4 L3 6.6 L3.9 6.6 L3.9 5.1 L2.4 5.1 L2.4 6 L0.6 4.5 L2.4 3 L2.4 3.9 L3.9 3.9 L3.9 2.4 L3 2.4 Z" fill="#f0f0f2" stroke="#9c9ca4" stroke-width="0.6"/></svg>
<span class="t" style="left:36.50px;top:451.51px;font-size:9.2px;line-height:9.2px;color:#45454d;transform:scaleX(0.8405);">Perspective</span>
<span class="t" style="left:88.80px;top:451.51px;font-size:9.2px;line-height:9.2px;color:#8e8e96;transform:scaleX(0.9102);">Top</span>
<span class="t" style="left:114.80px;top:451.51px;font-size:9.2px;line-height:9.2px;color:#8e8e96;transform:scaleX(0.8710);">Front</span>
<span class="t" style="left:144.80px;top:451.51px;font-size:9.2px;line-height:9.2px;color:#8e8e96;transform:scaleX(0.9173);">Right</span>
<div id="panel"></div>
<span class="t" style="left:375.30px;top:33.01px;font-size:9.2px;line-height:9.2px;color:#90909a;transform:scaleX(0.8800);">Aion-5X</span>
<div id="strip"></div>
<div id="track"></div><div id="marker"></div>
<div class="btn" style="left:401px;top:46px;width:17.5px;height:17.5px"></div>
<div class="btn" style="left:423.5px;top:46px;width:17.5px;height:17.5px"></div>
<div class="btn dis" style="left:446px;top:46px;width:17.5px;height:17.5px"></div>
<div class="btn" style="left:468.5px;top:46px;width:17.5px;height:17.5px"></div>
<div class="btn" style="left:533.5px;top:47px;width:74.5px;height:17.5px"></div>
<span class="t" style="left:552.50px;top:50.98px;font-size:9.0px;line-height:9.0px;color:#45454d;transform:scaleX(0.8932);">Load Machine</span>
<div class="btn" style="left:657.5px;top:47px;width:17px;height:17.5px"></div>
<div id="table"></div>
<div class="cd" style="left:418.2px"></div>
<div class="cd" style="left:432.5px"></div>
<div class="cd" style="left:453px"></div>
<div class="cd" style="left:588px"></div>
<div class="cd" style="left:656px"></div>
<span class="t" style="left:404.40px;top:70.13px;font-size:9.3px;line-height:9.3px;color:#222228;font-weight:bold;transform:scaleX(0.9094);">Nr</span>
<span class="t" style="left:510.00px;top:70.13px;font-size:9.3px;line-height:9.3px;color:#222228;font-weight:bold;transform:scaleX(0.8488);">Name</span>
<span class="t" style="left:614.30px;top:70.13px;font-size:9.3px;line-height:9.3px;color:#222228;font-weight:bold;transform:scaleX(0.8185);">Type</span>
<span class="t" style="left:399.90px;top:83.88px;font-size:9.0px;line-height:9.0px;color:#3f5277;transform:scaleX(0.8600);">1</span>
<span class="t" style="left:454.80px;top:83.88px;font-size:9.0px;line-height:9.0px;color:#45454d;transform:scaleX(0.8970);">top-contact</span>
<span class="t" style="left:589.30px;top:83.88px;font-size:9.0px;line-height:9.0px;color:#45454d;transform:scaleX(0.8970);">Contour</span>
<span class="t" style="left:664.00px;top:82.01px;font-size:11.8px;line-height:11.8px;color:#111;font-weight:bold;transform:scaleX(0.8186);">?</span>
<svg class="ck" style="left:436px;top:79.50px" width="16" height="14" viewBox="0 0 16 14"><path d="M1.6 7.6 L5.3 11 L13.4 2.2" fill="none" stroke="#0c0c0c" stroke-width="1.35"/></svg>
<span class="t" style="left:399.90px;top:96.97px;font-size:9.0px;line-height:9.0px;color:#3f5277;transform:scaleX(0.8600);">2</span>
<span class="t" style="left:454.80px;top:96.97px;font-size:9.0px;line-height:9.0px;color:#45454d;transform:scaleX(0.8970);">meander</span>
<span class="t" style="left:589.30px;top:96.97px;font-size:9.0px;line-height:9.0px;color:#45454d;transform:scaleX(0.8970);">Contour</span>
<span class="t" style="left:664.00px;top:95.10px;font-size:11.8px;line-height:11.8px;color:#111;font-weight:bold;transform:scaleX(0.8186);">?</span>
<svg class="ck" style="left:436px;top:92.59px" width="16" height="14" viewBox="0 0 16 14"><path d="M1.6 7.6 L5.3 11 L13.4 2.2" fill="none" stroke="#0c0c0c" stroke-width="1.35"/></svg>
<span class="t" style="left:399.90px;top:110.06px;font-size:9.0px;line-height:9.0px;color:#3f5277;transform:scaleX(0.8600);">3</span>
<span class="t" style="left:454.80px;top:110.06px;font-size:9.0px;line-height:9.0px;color:#45454d;transform:scaleX(0.8970);">To SMD</span>
<span class="t" style="left:589.30px;top:110.06px;font-size:9.0px;line-height:9.0px;color:#45454d;transform:scaleX(0.8970);">Contour</span>
<span class="t" style="left:664.00px;top:108.19px;font-size:11.8px;line-height:11.8px;color:#111;font-weight:bold;transform:scaleX(0.8186);">?</span>
<svg class="ck" style="left:436px;top:105.68px" width="16" height="14" viewBox="0 0 16 14"><path d="M1.6 7.6 L5.3 11 L13.4 2.2" fill="none" stroke="#0c0c0c" stroke-width="1.35"/></svg>
<span class="t" style="left:399.90px;top:123.15px;font-size:9.0px;line-height:9.0px;color:#3f5277;transform:scaleX(0.8600);">4</span>
<span class="t" style="left:454.80px;top:123.15px;font-size:9.0px;line-height:9.0px;color:#45454d;transform:scaleX(0.8970);">SMD 1</span>
<span class="t" style="left:589.30px;top:123.15px;font-size:9.0px;line-height:9.0px;color:#45454d;transform:scaleX(0.8970);">Contour</span>
<span class="t" style="left:664.00px;top:121.28px;font-size:11.8px;line-height:11.8px;color:#111;font-weight:bold;transform:scaleX(0.8186);">?</span>
<svg class="ck" style="left:436px;top:118.77px" width="16" height="14" viewBox="0 0 16 14"><path d="M1.6 7.6 L5.3 11 L13.4 2.2" fill="none" stroke="#0c0c0c" stroke-width="1.35"/></svg>
<span class="t" style="left:399.90px;top:136.24px;font-size:9.0px;line-height:9.0px;color:#3f5277;transform:scaleX(0.8600);">5</span>
<span class="t" style="left:454.80px;top:136.24px;font-size:9.0px;line-height:9.0px;color:#45454d;transform:scaleX(0.8970);">Inter SMD 1</span>
<span class="t" style="left:589.30px;top:136.24px;font-size:9.0px;line-height:9.0px;color:#45454d;transform:scaleX(0.8970);">Contour</span>
<span class="t" style="left:664.00px;top:134.37px;font-size:11.8px;line-height:11.8px;color:#111;font-weight:bold;transform:scaleX(0.8186);">?</span>
<svg class="ck" style="left:436px;top:131.86px" width="16" height="14" viewBox="0 0 16 14"><path d="M1.6 7.6 L5.3 11 L13.4 2.2" fill="none" stroke="#0c0c0c" stroke-width="1.35"/></svg>
<span class="t" style="left:399.90px;top:149.33px;font-size:9.0px;line-height:9.0px;color:#3f5277;transform:scaleX(0.8600);">6</span>
<span class="t" style="left:454.80px;top:149.33px;font-size:9.0px;line-height:9.0px;color:#45454d;transform:scaleX(0.8970);">Pick &amp; Place first side</span>
<span class="t" style="left:589.30px;top:149.33px;font-size:9.0px;line-height:9.0px;color:#45454d;transform:scaleX(0.8970);">Pick &amp; Place</span>
<span class="t" style="left:664.00px;top:147.46px;font-size:11.8px;line-height:11.8px;color:#111;font-weight:bold;transform:scaleX(0.8186);">?</span>
<svg class="ck" style="left:436px;top:144.95px" width="16" height="14" viewBox="0 0 16 14"><path d="M1.6 7.6 L5.3 11 L13.4 2.2" fill="none" stroke="#0c0c0c" stroke-width="1.35"/></svg>
<span class="t" style="left:399.90px;top:162.42px;font-size:9.0px;line-height:9.0px;color:#3f5277;transform:scaleX(0.8600);">7</span>
<span class="t" style="left:454.80px;top:162.42px;font-size:9.0px;line-height:9.0px;color:#45454d;transform:scaleX(0.8970);">SMD 2</span>
<span class="t" style="left:589.30px;top:162.42px;font-size:9.0px;line-height:9.0px;color:#45454d;transform:scaleX(0.8970);">Contour</span>
<span class="t" style="left:664.00px;top:160.55px;font-size:11.8px;line-height:11.8px;color:#111;font-weight:bold;transform:scaleX(0.8186);">?</span>
<svg class="ck" style="left:436px;top:158.04px" width="16" height="14" viewBox="0 0 16 14"><path d="M1.6 7.6 L5.3 11 L13.4 2.2" fill="none" stroke="#0c0c0c" stroke-width="1.35"/></svg>
<span class="t" style="left:399.90px;top:175.51px;font-size:9.0px;line-height:9.0px;color:#3f5277;transform:scaleX(0.8600);">8</span>
<span class="t" style="left:454.80px;top:175.51px;font-size:9.0px;line-height:9.0px;color:#45454d;transform:scaleX(0.8970);">Inter SMD 2</span>
<span class="t" style="left:589.30px;top:175.51px;font-size:9.0px;line-height:9.0px;color:#45454d;transform:scaleX(0.8970);">Contour</span>
<span class="t" style="left:664.00px;top:173.64px;font-size:11.8px;line-height:11.8px;color:#111;font-weight:bold;transform:scaleX(0.8186);">?</span>
<svg class="ck" style="left:436px;top:171.13px" width="16" height="14" viewBox="0 0 16 14"><path d="M1.6 7.6 L5.3 11 L13.4 2.2" fill="none" stroke="#0c0c0c" stroke-width="1.35"/></svg>
<span class="t" style="left:399.90px;top:188.60px;font-size:9.0px;line-height:9.0px;color:#3f5277;transform:scaleX(0.8600);">9</span>
<span class="t" style="left:454.80px;top:188.60px;font-size:9.0px;line-height:9.0px;color:#45454d;transform:scaleX(0.8970);">Pick &amp; Place second side</span>
<span class="t" style="left:589.30px;top:188.60px;font-size:9.0px;line-height:9.0px;color:#45454d;transform:scaleX(0.8970);">Pick &amp; Place</span>
<span class="t" style="left:664.00px;top:186.73px;font-size:11.8px;line-height:11.8px;color:#111;font-weight:bold;transform:scaleX(0.8186);">?</span>
<svg class="ck" style="left:436px;top:184.22px" width="16" height="14" viewBox="0 0 16 14"><path d="M1.6 7.6 L5.3 11 L13.4 2.2" fill="none" stroke="#0c0c0c" stroke-width="1.35"/></svg>
<span class="t" style="left:399.90px;top:201.69px;font-size:9.0px;line-height:9.0px;color:#3f5277;transform:scaleX(0.8600);">10</span>
<span class="t" style="left:454.80px;top:201.69px;font-size:9.0px;line-height:9.0px;color:#45454d;transform:scaleX(0.8970);">SMD 3</span>
<span class="t" style="left:589.30px;top:201.69px;font-size:9.0px;line-height:9.0px;color:#45454d;transform:scaleX(0.8970);">Contour</span>
<span class="t" style="left:664.00px;top:199.82px;font-size:11.8px;line-height:11.8px;color:#111;font-weight:bold;transform:scaleX(0.8186);">?</span>
<svg class="ck" style="left:436px;top:197.31px" width="16" height="14" viewBox="0 0 16 14"><path d="M1.6 7.6 L5.3 11 L13.4 2.2" fill="none" stroke="#0c0c0c" stroke-width="1.35"/></svg>
<span class="t" style="left:399.90px;top:214.78px;font-size:9.0px;line-height:9.0px;color:#3f5277;transform:scaleX(0.8600);">11</span>
<span class="t" style="left:454.80px;top:214.78px;font-size:9.0px;line-height:9.0px;color:#45454d;transform:scaleX(0.8970);">long connections</span>
<span class="t" style="left:589.30px;top:214.78px;font-size:9.0px;line-height:9.0px;color:#45454d;transform:scaleX(0.8970);">Contour</span>
<span class="t" style="left:664.00px;top:212.91px;font-size:11.8px;line-height:11.8px;color:#111;font-weight:bold;transform:scaleX(0.8186);">?</span>
<svg class="ck" style="left:436px;top:210.40px" width="16" height="14" viewBox="0 0 16 14"><path d="M1.6 7.6 L5.3 11 L13.4 2.2" fill="none" stroke="#0c0c0c" stroke-width="1.35"/></svg>
<span class="t" style="left:399.90px;top:227.87px;font-size:9.0px;line-height:9.0px;color:#3f5277;transform:scaleX(0.8600);">12</span>
<span class="t" style="left:454.80px;top:227.87px;font-size:9.0px;line-height:9.0px;color:#45454d;transform:scaleX(0.8970);">Pick &amp; Place third side</span>
<span class="t" style="left:589.30px;top:227.87px;font-size:9.0px;line-height:9.0px;color:#45454d;transform:scaleX(0.8970);">Pick &amp; Place</span>
<span class="t" style="left:664.00px;top:226.00px;font-size:11.8px;line-height:11.8px;color:#111;font-weight:bold;transform:scaleX(0.8186);">?</span>
<svg class="ck" style="left:436px;top:223.49px" width="16" height="14" viewBox="0 0 16 14"><path d="M1.6 7.6 L5.3 11 L13.4 2.2" fill="none" stroke="#0c0c0c" stroke-width="1.35"/></svg>
<div id="selrow" style="top:239.08px"></div>
<span class="t" style="left:399.90px;top:240.96px;font-size:9.0px;line-height:9.0px;color:#fff;transform:scaleX(0.8600);">13</span>
<span class="t" style="left:454.80px;top:240.96px;font-size:9.0px;line-height:9.0px;color:#fff;transform:scaleX(0.8970);">Pick &amp; Place large components</span>
<span class="t" style="left:589.30px;top:240.96px;font-size:9.0px;line-height:9.0px;color:#fff;transform:scaleX(0.8970);">Pick &amp; Place</span>
<span class="t" style="left:664.00px;top:239.09px;font-size:11.8px;line-height:11.8px;color:#111;font-weight:bold;transform:scaleX(0.8186);">?</span>
<svg class="ck" style="left:436px;top:236.58px" width="16" height="14" viewBox="0 0 16 14"><path d="M1.6 7.6 L5.3 11 L13.4 2.2" fill="none" stroke="#0c0c0c" stroke-width="1.35"/></svg>
<div class="grp" style="top:262.4px;height:30.8px"></div><div class="ghb" style="left:402px;top:258px;width:19.5px"></div>
<span class="t" style="left:403.80px;top:258.03px;font-size:9.3px;line-height:9.3px;color:#222228;font-weight:bold;transform:scaleX(0.8450);">Tool</span>
<span class="t" style="left:405.00px;top:275.78px;font-size:9.0px;line-height:9.0px;color:#45454d;transform:scaleX(0.9389);">Tool</span>
<div class="inp" style="left:494px;top:274px;width:135.5px;height:14px"><em></em></div>
<span class="t" style="left:496.20px;top:275.98px;font-size:9.0px;line-height:9.0px;color:#45454d;transform:scaleX(0.8559);">Pick and Place (MP1B)</span>
<div class="grp" style="top:300.3px;height:31.6px"></div><div class="ghb" style="left:402px;top:296px;width:41.5px"></div>
<span class="t" style="left:403.80px;top:295.63px;font-size:9.3px;line-height:9.3px;color:#222228;font-weight:bold;transform:scaleX(0.8753);">Geometry</span>
<span class="t" style="left:405.20px;top:313.48px;font-size:9.0px;line-height:9.0px;color:#45454d;transform:scaleX(0.9032);">SMD components</span>
<div class="btn" style="left:494.5px;top:312px;width:89.5px;height:13px"></div>
<span class="t" style="left:529.90px;top:314.02px;font-size:8.6px;line-height:8.6px;color:#45454d;transform:scaleX(0.9320);">&lt;select&gt;</span>
<div class="btn" style="left:593.5px;top:312px;width:35.5px;height:13px"></div>
<span class="t" style="left:607.50px;top:313.78px;font-size:9.0px;line-height:9.0px;color:#45454d;transform:scaleX(0.8972);">clear</span>
<div class="grp" style="top:337.8px;height:31.4px"></div><div class="ghb" style="left:402px;top:333px;width:30.5px"></div>
<span class="t" style="left:403.80px;top:333.33px;font-size:9.3px;line-height:9.3px;color:#222228;font-weight:bold;transform:scaleX(0.8103);">Placing</span>
<span class="t" style="left:405.20px;top:351.58px;font-size:9.0px;line-height:9.0px;color:#45454d;transform:scaleX(0.8756);">Contact pressure</span>
<div class="inp" style="left:494px;top:349.5px;width:122.5px;height:13px"></div>
<span class="t" style="left:497.00px;top:351.55px;font-size:8.8px;line-height:8.8px;color:#45454d;transform:scaleX(0.8918);">0.5000</span>
<div id="spin"><b class="u"></b><b class="d"></b></div>
<span class="t" style="left:633.00px;top:351.58px;font-size:9.0px;line-height:9.0px;color:#45454d;transform:scaleX(0.9337);">mm</span>
<div style="left:398.5px;top:440px;width:258px;height:24px;background:#f4f4f4"></div>
<div class="btn" style="left:400.5px;top:442.5px;width:94px;height:19px"></div>
<span class="t" style="left:415.30px;top:447.68px;font-size:9.0px;line-height:9.0px;color:#45454d;transform:scaleX(0.8927);">Preview execution</span>
<div class="btn" style="left:500px;top:442.5px;width:136px;height:19px"></div>
<span class="t" style="left:543.30px;top:447.68px;font-size:9.0px;line-height:9.0px;color:#45454d;transform:scaleX(0.8873);">Export GCode</span>
<div id="chk"></div>
<span class="t" style="left:652.50px;top:447.78px;font-size:9.0px;line-height:9.0px;color:#45454d;transform:scaleX(0.8431);">Dry</span>
<svg id="picons" style="left:373px;top:32px" width="323" height="308" viewBox="373 32 323 308">
<path d="M409.8 49.6 L409.8 62 M403.4 55.8 L416.2 55.8" stroke="#17a317" stroke-width="2.6" stroke-linecap="round" fill="none"/>
<path d="M432.2 50.4 L438.6 60.7 L425.8 60.7 Z" fill="#0a0a0a"/>
<path d="M448.3 50.4 L460.9 50.4 L454.6 60.7 Z" fill="#8c8c8c"/>
<path d="M473.2 53 L481.6 53 L481 60.6 Q481 61.4 480.2 61.4 L474.6 61.4 Q473.8 61.4 473.8 60.6 Z M472.2 50.5 L475.6 50.5 L476.2 49.5 L478.6 49.5 L479.2 50.5 L482.6 50.5 L482.6 52.2 L472.2 52.2 Z" fill="#d60000"/>
<rect x="535.8" y="49.6" width="11.6" height="11.8" rx="1.6" fill="#f4f4f4" stroke="#2a2a2a" stroke-width="1.1"/><path d="M538 51.4 L545.2 51.4 L545.2 57.4 L538 57.4 Z" fill="none" stroke="#2a2a2a" stroke-width="0.6"/><path d="M539.6 52.4 L541.6 56.4 L543.6 52.4" fill="none" stroke="#1a1a1a" stroke-width="1.1"/><path d="M538 59.2 L545.2 59.2" stroke="#2a2a2a" stroke-width="1.2"/>
<path d="M672.17 54.63 L672.17 57.17 L670.46 57.41 L670.19 58.05 L671.23 59.44 L669.44 61.23 L668.05 60.19 L667.41 60.46 L667.17 62.17 L664.63 62.17 L664.39 60.46 L663.75 60.19 L662.36 61.23 L660.57 59.44 L661.61 58.05 L661.34 57.41 L659.63 57.17 L659.63 54.63 L661.34 54.39 L661.61 53.75 L660.57 52.36 L662.36 50.57 L663.75 51.61 L664.39 51.34 L664.63 49.63 L667.17 49.63 L667.41 51.34 L668.05 51.61 L669.44 50.57 L671.23 52.36 L670.19 53.75 L670.46 54.39 Z" fill="#0a0a0a"/><circle cx="665.9" cy="55.9" r="2.3" fill="#fdfdfd"/>
<circle cx="683.5" cy="38" r="2.6" fill="none" stroke="#cacad0" stroke-width="1.6" stroke-dasharray="1.2 0.85"/><circle cx="683.5" cy="38" r="1.9" fill="none" stroke="#cacad0" stroke-width="1"/>
<rect x="391.3" y="52" width="0.9" height="0.9" fill="#9a9aa2"/><rect x="391.3" y="55" width="0.9" height="0.9" fill="#9a9aa2"/>
<rect x="679.8" y="191.5" width="16.2" height="23" fill="#ececee"/>
<path d="M682 54 L686.4 51.6 L691 54 L686.4 57.4 Z" fill="#e8402a"/><path d="M682 54 L686.4 57.4 L691 54 L691 56.6 L686.4 60.4 L682 56.6 Z" fill="#3a58c8"/><path d="M682.6 54.2 L686.4 52.4 L690.2 54.2 L686.4 56.6 Z" fill="#f7a08c"/>
<defs><linearGradient id="cw1" x1="0" y1="0" x2="1" y2="1"><stop offset="0" stop-color="#e02020"/><stop offset="0.33" stop-color="#e0d020"/><stop offset="0.66" stop-color="#20b040"/><stop offset="1" stop-color="#2040e0"/></linearGradient></defs>
<circle cx="686.4" cy="80.5" r="3.5" fill="none" stroke="url(#cw1)" stroke-width="2.2"/><path d="M683 78.4 A4 4 0 0 0 684.4 84" stroke="#c020c0" stroke-width="2.2" fill="none"/>
<rect x="681.6" y="100.2" width="9.8" height="7" rx="0.8" fill="#d0d0d0" stroke="#222" stroke-width="1"/><path d="M684.4 109.4 L688.6 109.4 M686.5 107.2 L686.5 109.4" stroke="#222" stroke-width="1.1"/>
<rect x="681.4" y="125.6" width="10" height="9" rx="1" fill="#2f5fd8" stroke="#1b3a98" stroke-width="0.7"/><circle cx="686.4" cy="130.2" r="2.6" fill="#8fb0f8"/><path d="M685.2 129 Q686.4 127.8 687.4 129.2 Q687.4 130.2 686.4 130.8 L686.4 131.6" stroke="#fff" stroke-width="0.7" fill="none"/>
<circle cx="684.4" cy="155.4" r="2.4" fill="none" stroke="#777" stroke-width="0.9"/><path d="M686 151.6 L689.6 151.6 L691 157.6 L686.4 157.6 Z" fill="none" stroke="#777" stroke-width="0.9"/>
<path d="M682.4 182 L683.4 180.4 L683.4 177.4 Q683.4 174.2 686.5 173.8 Q689.6 174.2 689.6 177.4 L689.6 180.4 L690.6 182 Z" fill="#1868e0"/><circle cx="686.5" cy="183.2" r="1.1" fill="#1868e0"/>
<path d="M686.5 197.4 L690.8 199.9 L690.8 204.9 L686.5 207.4 L682.2 204.9 L682.2 199.9 Z" fill="none" stroke="#2aa0e6" stroke-width="1.1"/><path d="M683.4 201 L686.5 202.6 L689.6 201 M686.5 202.6 L686.5 206" fill="none" stroke="#2aa0e6" stroke-width="0.8"/>
<path d="M681.8 226 L684 226 L684.8 224.8 L688.4 224.8 L689.2 226 L691.2 226 L691.2 232.4 L681.8 232.4 Z" fill="#333"/><circle cx="686.6" cy="229.2" r="2.1" fill="#888" stroke="#ddd" stroke-width="0.5"/>
<rect x="681.3" y="250.2" width="9.9" height="5.8" rx="0.8" fill="#3b96dc"/><circle cx="686.5" cy="248.7" r="0.9" fill="#222"/><circle cx="683.4" cy="257.3" r="0.9" fill="#222"/><circle cx="689" cy="257.3" r="0.9" fill="#222"/>
<path d="M499.4 321.6 L500 319.4 L504.6 314.8 L506.2 316.4 L501.6 321 Z" fill="#111"/>
<path d="M597 315.4 L602.4 321.6 M602.4 315.4 L597 321.6" stroke="#e01010" stroke-width="1.5" fill="none"/>
</svg>
</div></body></html>
